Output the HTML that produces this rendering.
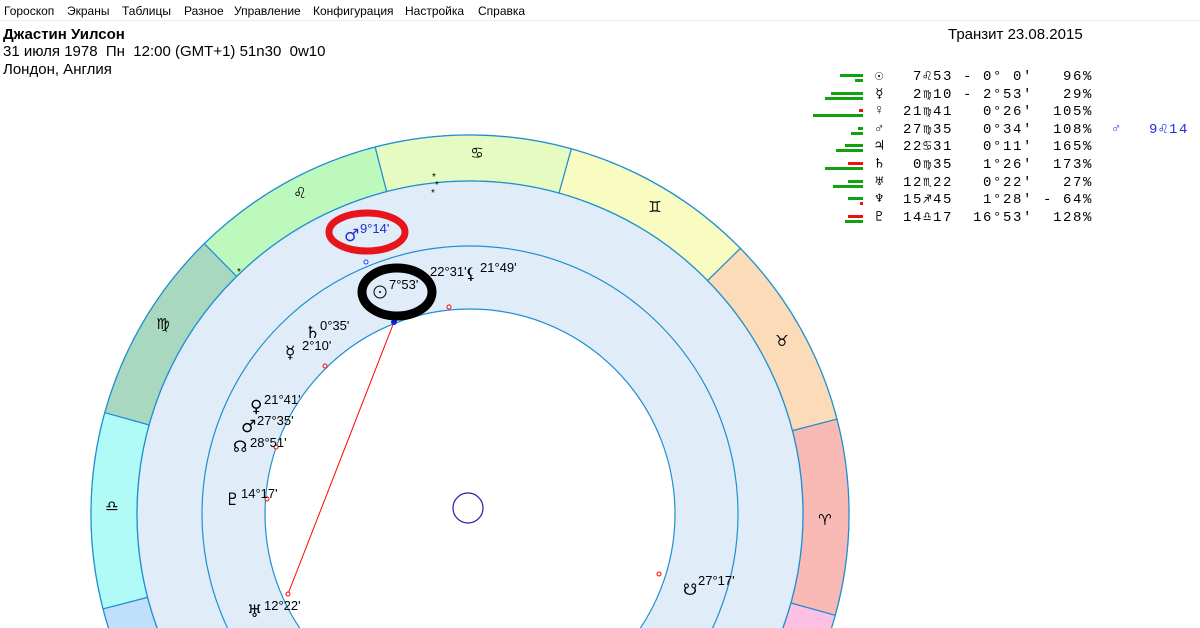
<!DOCTYPE html>
<html style="overflow:hidden"><head><meta charset="utf-8"><style>
html,body{margin:0;width:1200px;height:628px;overflow:hidden}
body{background:#fff;font-family:"Liberation Sans",sans-serif;position:relative}
.m{position:absolute;top:4px;font-size:12px;color:#000}
.t{position:absolute;font-size:15px;color:#000;white-space:pre}
.tb{position:absolute;font-family:"Liberation Mono","DejaVu Sans Mono",monospace;font-size:14px;letter-spacing:1.6px;white-space:pre;color:#000}
.b{position:absolute;height:3px}
.g{background:#10a010}.r{background:#f01010}
</style></head><body>
<div class="m" style="left:4px">Гороскоп</div>
<div class="m" style="left:67px">Экраны</div>
<div class="m" style="left:122px">Таблицы</div>
<div class="m" style="left:184px">Разное</div>
<div class="m" style="left:234px">Управление</div>
<div class="m" style="left:313px">Конфигурация</div>
<div class="m" style="left:405px">Настройка</div>
<div class="m" style="left:478px">Справка</div>
<div style="position:absolute;left:0;top:20px;width:1200px;height:1px;background:#eee"></div>
<div class="t" style="left:3px;top:26px;font-weight:bold">Джастин Уилсон</div>
<div class="t" style="left:3px;top:43px">31 июля 1978  Пн  12:00 (GMT+1) 51n30  0w10</div>
<div class="t" style="left:3px;top:61px">Лондон, Англия</div>
<div class="t" style="left:948px;top:26px">Транзит 23.08.2015</div>

<svg id="s" width="1200" height="628" style="position:absolute;left:0;top:0;overflow:hidden" font-family="Liberation Sans, DejaVu Sans, sans-serif"></svg>

<div id="tbl"></div>
<script>
var cx=470,cy=514,R=379,Rz=333,Rm=268,Ri=205;
var cols=["#f9bab6","#fcdbb8","#f9fcc0","#e5fbc2","#bdf8bc","#a9d8c0","#b0fbf7","#c0dffa","#d8d0f8","#d0e0f8","#c8f0f0","#fcc0e4"];
var s='';
s+='<circle cx="'+cx+'" cy="'+cy+'" r="'+R+'" fill="#e0ecf8" stroke="#2090d0" stroke-width="1.3"/>';
function pt(r,a){a=a*Math.PI/180;return [cx+r*Math.cos(a),cy-r*Math.sin(a)];}
for(var k=0;k<12;k++){var a0=-15.5+30*k,a1=a0+30;
var p0=pt(R,a0),p1=pt(R,a1),q1=pt(Rz,a1),q0=pt(Rz,a0);
s+='<path d="M'+p0+' A'+R+' '+R+' 0 0 0 '+p1+' L'+q1+' A'+Rz+' '+Rz+' 0 0 1 '+q0+'Z" fill="'+cols[k]+'" stroke="#2090d0" stroke-width="1.2"/>';}
s+='<circle cx="'+cx+'" cy="'+cy+'" r="'+Rz+'" fill="#e0ecf8" stroke="#2090d0" stroke-width="1.3"/>';
s+='<circle cx="'+cx+'" cy="'+cy+'" r="'+Rm+'" fill="none" stroke="#2090d0" stroke-width="1.2"/>';
s+='<circle cx="'+cx+'" cy="'+cy+'" r="'+Ri+'" fill="#fff" stroke="#2090d0" stroke-width="1.2"/>';
var zg=[["♈",825,525],["♉",782,346],["♊",655,212],["♋",477,158],["♌",300,198],["♍",163,329],["♎",112,511]];
zg.forEach(function(z){s+='<text x="'+z[1]+'" y="'+z[2]+'" font-size="15" text-anchor="middle" font-family="DejaVu Sans">'+z[0]+'\uFE0E</text>';});
s+='<circle cx="468" cy="508" r="15" fill="none" stroke="#2020a0" stroke-width="1.2"/>';
s+='<line x1="394" y1="322" x2="288" y2="594" stroke="#f00" stroke-width="1"/>';
s+='<circle cx="394" cy="322" r="3" fill="#1020e0"/>';
[[449,307],[325,366],[276,447],[267,499],[288,594],[659,574]].forEach(function(d){s+='<circle cx="'+d[0]+'" cy="'+d[1]+'" r="2" fill="#fff" stroke="#f00" stroke-width="1"/>';});
s+='<circle cx="366" cy="262" r="2" fill="#fff" stroke="#2040f0" stroke-width="1"/>';
[[434,180],[437,188],[433,196],[239,275]].forEach(function(d){s+='<text x="'+d[0]+'" y="'+d[1]+'" font-size="10" text-anchor="middle">*</text>';});
function T(x,y,t,c,fs,ff){s+='<text x="'+x+'" y="'+y+'" font-size="'+(fs||13)+'" fill="'+(c||'#000')+'"'+(ff?' font-family="DejaVu Sans"':'')+'>'+t+'</text>';}
T(344,241,"♂","#2030d0",17,1);T(360,233,"9°14'","#2030d0");
s+='<circle cx="380" cy="292" r="6" fill="none" stroke="#000" stroke-width="1"/><circle cx="380" cy="292" r="1" fill="#000"/>';
T(389,289,"7°53'");T(430,276,"22°31'");T(465,279,"⚸","#000",16,1);T(480,272,"21°49'");
T(305,338,"♄","#000",17,1);T(320,330,"0°35'");
T(285,358,"☿","#000",17,1);T(302,350,"2°10'");
T(250,412,"♀","#000",17,1);T(264,404,"21°41'");
T(241,432,"♂","#000",17,1);T(257,425,"27°35'");
T(233,452,"☊","#000",16,1);T(250,447,"28°51'");
T(225,505,"♇","#000",17,1);T(241,498,"14°17'");
T(247,617,"♅","#000",17,1);T(264,610,"12°22'");
T(683,595,"☋","#000",16,1);T(698,585,"27°17'");
s+='<ellipse cx="367" cy="232" rx="38" ry="19" fill="none" stroke="#e8141c" stroke-width="7"/>';
s+='<ellipse cx="397" cy="292" rx="35" ry="24" fill="none" stroke="#000" stroke-width="9"/>';
document.getElementById('s').innerHTML=s;
var rows=[["☉","  7♌53 - 0° 0'   96%"],["☿","  2♍10 - 2°53'   29%"],["♀"," 21♍41   0°26'  105%"],["♂"," 27♍35   0°34'  108%"],["♃"," 22♋31   0°11'  165%"],["♄","  0♍35   1°26'  173%"],["♅"," 12♏22   0°22'   27%"],["♆"," 15♐45   1°28' - 64%"],["♇"," 14♎17  16°53'  128%"]];
var bars=[[[840,863,'g'],[855,863,'g']],[[831,863,'g'],[825,863,'g']],[[859,863,'r'],[813,863,'g']],[[858,863,'g'],[851,863,'g']],[[845,863,'g'],[836,863,'g']],[[848,863,'r'],[825,863,'g']],[[848,863,'g'],[833,863,'g']],[[848,863,'g'],[860,863,'r']],[[848,863,'r'],[845,863,'g']]];
var h='';
rows.forEach(function(r,i){var y=68+i*17.6;
h+='<div class="tb" style="left:875px;top:'+y+'px">'+r[0]+'</div><div class="tb" style="left:893px;top:'+y+'px">'+r[1]+'</div>';
h+='<div class="b '+bars[i][0][2]+'" style="left:'+bars[i][0][0]+'px;width:'+(bars[i][0][1]-bars[i][0][0])+'px;top:'+(y+6)+'px"></div>';
h+='<div class="b '+bars[i][1][2]+'" style="left:'+bars[i][1][0]+'px;width:'+(bars[i][1][1]-bars[i][1][0])+'px;top:'+(y+11)+'px"></div>';});
h+='<div class="tb" style="left:1112px;top:'+(68+3*17.6)+'px;color:#2030e0">♂</div><div class="tb" style="left:1149px;top:'+(68+3*17.6)+'px;color:#2030e0">9♌14</div>';
document.getElementById('tbl').innerHTML=h;
</script>
</body></html>
